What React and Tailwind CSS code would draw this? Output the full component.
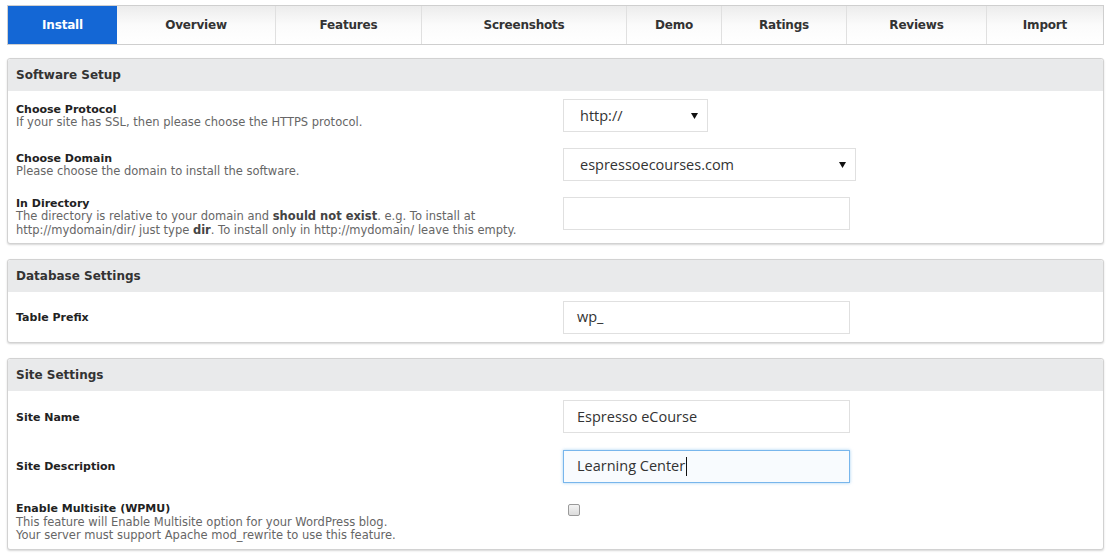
const tabs = [
  { label: "Install", width: "w-[109px]", active: true },
  { label: "Overview", width: "w-[158px]" },
  { label: "Features", width: "w-[146px]" },
  { label: "Screenshots", width: "w-[205px]" },
  { label: "Demo", width: "w-[95px]" },
  { label: "Ratings", width: "w-[125px]" },
  { label: "Reviews", width: "w-[140px]" },
  { label: "Import", width: "flex-1" }
];

const sans = "font-['DejaVu_Sans',Verdana,sans-serif]";
const field = "font-['Open_Sans',sans-serif] text-[14.5px] text-[#333]";

function Panel({ title, children, bottom = "pb-[5px]" }) {
  return (
    <section
      className={`rounded-[3px] border border-[#d2d2d2] bg-white shadow-[0_1px_2px_rgba(0,0,0,0.16)] ${bottom}`}
    >
      <div className="flex h-[32px] items-center rounded-t-[3px] bg-[#e9eaeb] pl-2">
        <h3 className={`${sans} text-[12px] font-bold text-[#333]`}>{title}</h3>
      </div>
      {children}
    </section>
  );
}

function Row({ label, desc, children, top = false, className = "h-[49px]", labelShift = "" }) {
  return (
    <div className={`flex ${top ? "items-start pt-[11px]" : "items-center"} ${className}`}>
      <div className={`${sans} w-[555px] shrink-0 pl-2 leading-[13.5px] ${labelShift}`}>
        <p className="text-[11px] font-bold text-[#222]">{label}</p>
        {desc && <div className="text-[11.5px] text-[#666]">{desc}</div>}
      </div>
      <div className="flex-1">{children}</div>
    </div>
  );
}

function Arrow() {
  return (
    <svg width="7" height="6" viewBox="0 0 7 6" aria-hidden="true">
      <path d="M0 0 L7 0 L3.5 6 Z" fill="#111" />
    </svg>
  );
}

function FakeSelect({ value, width }) {
  return (
    <div
      className={`flex h-[33px] items-center justify-between border border-[#e0e0e0] bg-white pl-[16px] pr-[9px] ${width} ${field}`}
    >
      <span>{value}</span>
      <Arrow />
    </div>
  );
}

function TextInput({ value = "", focused = false }) {
  return (
    <div
      className={`flex h-[33px] w-[287px] items-center border pl-[13px] ${field} ${
        focused
          ? "border-[#78b6ec] bg-[#f8fbfe] shadow-[0_0_3px_rgba(102,175,233,0.6)]"
          : "border-[#e0e0e0] bg-white"
      }`}
    >
      <span>{value}</span>
      {focused && <span className="ml-[1px] h-[19px] w-px bg-[#111]" />}
    </div>
  );
}

export default function App() {
  return (
    <div className="min-h-[555px] w-[1110px] bg-white pl-[7px] pr-[6px] pt-[5px]">
      <nav className="flex h-[40px] border border-[#cfcfcf]">
        {tabs.map((tab, i) => (
          <div
            key={tab.label}
            className={`flex items-center justify-center ${tab.width} ${sans} text-[12px] font-bold tracking-[-0.2px] ${
              tab.active
                ? "bg-[#1467d5] text-white"
                : `bg-gradient-to-b from-[#ececec] via-[#fbfbfb] to-white text-[#333] ${
                    i > 1 ? "border-l border-[#e0e0e0]" : ""
                  }`
            }`}
          >
            {tab.label}
          </div>
        ))}
      </nav>

      <div className="mt-[13px] flex flex-col gap-[15px]">
        <Panel title="Software Setup">
          <Row label="Choose Protocol" desc="If your site has SSL, then please choose the HTTPS protocol." labelShift="mt-[1px]">
            <FakeSelect value="http://" width="w-[145px]" />
          </Row>
          <Row label="Choose Domain" desc="Please choose the domain to install the software." labelShift="mt-[1px]">
            <FakeSelect value="espressoecourses.com" width="w-[293px]" />
          </Row>
          <Row
            label="In Directory"
            labelShift="mt-[7px]"
            desc={
              <>
                The directory is relative to your domain and <b className="text-[#444]">should not exist</b>. e.g. To
                install at
                <br />
                http://mydomain/dir/ just type <b className="text-[#444]">dir</b>. To install only in http://mydomain/
                leave this empty.
              </>
            }
          >
            <TextInput />
          </Row>
        </Panel>

        <Panel title="Database Settings" bottom="pb-0">
          <Row label="Table Prefix" className="h-[50px]" labelShift="mt-[1px]">
            <TextInput value="wp_" />
          </Row>
        </Panel>

        <Panel title="Site Settings" bottom="pb-[5px]">
          <div className="pt-[1px]">
            <Row label="Site Name" labelShift="mt-[2px]">
              <TextInput value="Espresso eCourse" />
            </Row>
            <Row label="Site Description" className="h-[50px]" labelShift="mt-[2px]">
              <TextInput value="Learning Center" focused />
            </Row>
            <Row
              top
              className="h-[53px]"
              label="Enable Multisite (WPMU)"
              desc={
                <>
                  This feature will Enable Multisite option for your WordPress blog.
                  <br />
                  Your server must support Apache mod_rewrite to use this feature.
                </>
              }
            >
              <div className="ml-[5px] mt-[2px] h-[12px] w-[12px] rounded-[2px] border border-[#9a9a9a] bg-gradient-to-b from-[#f4f4f4] to-[#dcdcdc]" />
            </Row>
          </div>
        </Panel>
      </div>
    </div>
  );
}
